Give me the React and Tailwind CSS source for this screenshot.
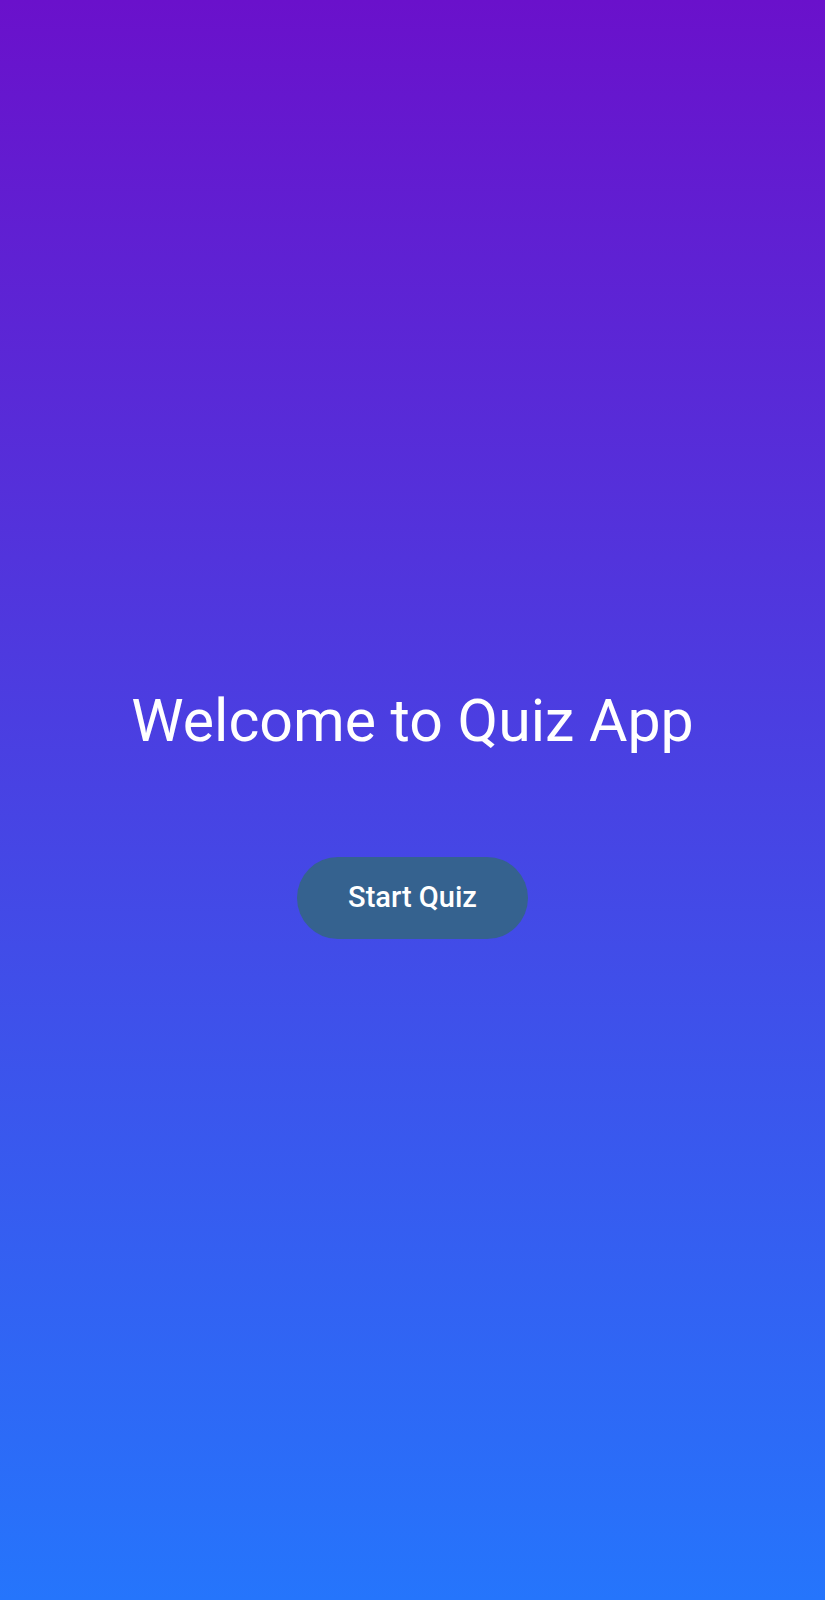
export default function App() {
  return (
    <main
      className="min-h-[1600px] w-full flex flex-col items-center bg-linear-to-b/srgb from-[#6a11cb] to-[#2575fc] pt-[683px]"
      style={{ fontFamily: "Roboto, 'Noto Sans', sans-serif" }}
    >
      {/* Welcome title */}
      <h1 className="text-[59px] leading-[76px] text-white font-normal">
        Welcome to Quiz App
      </h1>

      <button className="mt-[98px] w-[231px] h-[82px] rounded-full bg-[#35628f] text-white text-[29px] font-medium">
        Start Quiz
      </button>
    </main>
  );
}
